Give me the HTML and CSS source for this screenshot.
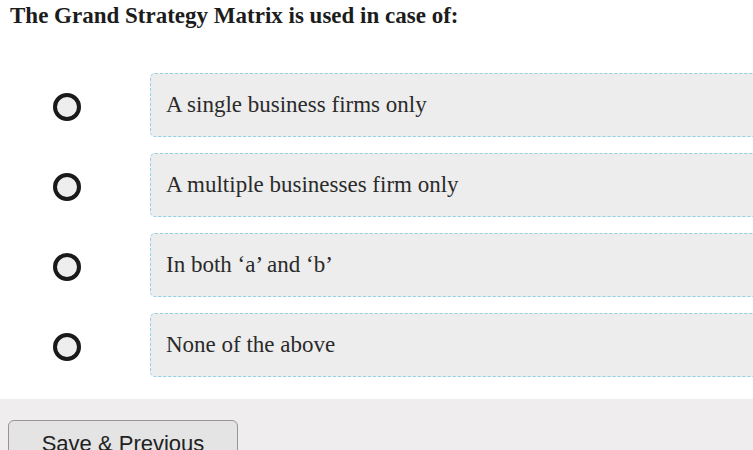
FILE: index.html
```html
<!DOCTYPE html>
<html lang="en">
<head>
  <meta charset="UTF-8">
  <meta name="viewport" content="width=device-width, initial-scale=1.0">
  <title>Question</title>
  <link rel="stylesheet" href="styles.css">
</head>
<body>
  <div class="question">
    <h2 class="q-title">The Grand Strategy Matrix is used in case of:</h2>

    <ul class="options">
      <li class="option">
        <span class="radio"></span>
        <div class="answer">A single business firms only</div>
      </li>
      <li class="option">
        <span class="radio"></span>
        <div class="answer">A multiple businesses firm only</div>
      </li>
      <li class="option">
        <span class="radio"></span>
        <div class="answer">In both &lsquo;a&rsquo; and &lsquo;b&rsquo;</div>
      </li>
      <li class="option">
        <span class="radio"></span>
        <div class="answer">None of the above</div>
      </li>
    </ul>
  </div>

  <div class="footer">
    <button class="btn">Save &amp; Previous</button>
  </div>
</body>
</html>
```

FILE: styles.css
```css
html, body {
  margin: 0;
  padding: 0;
  overflow: hidden;
  background: #fff;
}
body {
  font-family: 'Liberation Serif', 'Times New Roman', serif;
  color: #222;
}
.question {
  width: 820px;
}
.q-title {
  margin: 0;
  padding: 3px 10px 0;
  font-size: 23px;
  line-height: 26px;
  font-weight: bold;
  color: #1c1c1c;
}
.options {
  list-style: none;
  margin: 0;
  padding: 44px 0 22px;
  display: flex;
  flex-direction: column;
  gap: 16px;
}
.option {
  display: flex;
  align-items: center;
}
.radio {
  width: 20px;
  height: 20px;
  border: 4px solid #1a1a1a;
  border-radius: 50%;
  background: #eee;
  margin: 3px 69px 0 53px;
  flex: none;
}
.answer {
  flex: 1;
  height: 64px;
  display: flex;
  align-items: center;
  padding: 0 16px 1px 15px;
  box-sizing: border-box;
  background: #ededed;
  border: 1px dashed #8fd3e3;
  border-radius: 5px;
  font-size: 23px;
  color: #2a2a2a;
}
.footer {
  background: #efeded;
  padding: 21px 8px 20px;
  height: 100px;
}
.btn {
  width: 230px;
  height: 42px;
  font-family: 'Liberation Sans', Arial, sans-serif;
  font-size: 22px;
  color: #222;
  background: #e4e4e4;
  border: 1px solid #959595;
  border-radius: 6px;
  padding: 6px 0 0;
}
```
